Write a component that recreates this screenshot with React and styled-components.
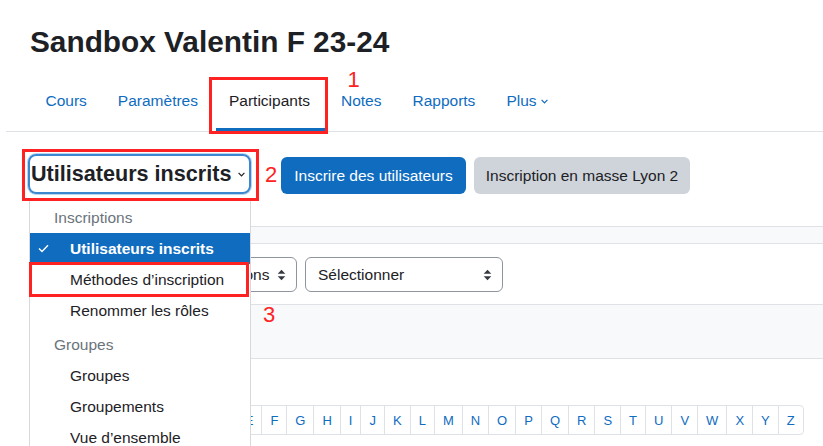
import React from "react";
import styled, { createGlobalStyle } from "styled-components";

const colors = {
  text: "#1d2125",
  link: "#0f6cbf",
  muted: "#6a737b",
  border: "#dee2e6",
  band: "#f8f9fa",
  field: "#8f959e",
  focus: "#3c88d0",
  secondary: "#ced4da",
  mark: "#ff2222",
};

const GlobalStyle = createGlobalStyle`
  html, body {
    margin: 0;
    padding: 0;
    background: #fff;
  }
  body {
    font-family: "Liberation Sans", Arial, sans-serif;
    color: ${colors.text};
    overflow: hidden;
  }
  #root {
    width: 823px;
    height: 446px;
    overflow: hidden;
  }
`;

const Page = styled.div`
  padding-top: 24px;
`;

const Title = styled.h1`
  margin: 0 0 0 30px;
  font-size: 29.8px;
  line-height: 36px;
  font-weight: 700;
  color: ${colors.text};
`;

const SecondaryNav = styled.nav`
  display: flex;
  margin: 11px 0 0 6px;
  padding-left: 24px;
  border-bottom: 1px solid ${colors.border};
`;

const Tab = styled.div`
  position: relative;
  display: flex;
  align-items: center;
  gap: 4px;
  height: 60px;
  padding: 0 15.5px;
  font-size: 15.5px;
  color: ${({ $active }) => ($active ? colors.text : colors.link)};

  &::after {
    content: "";
    position: absolute;
    left: 3px;
    right: 0;
    bottom: 0;
    height: 3px;
    background: ${({ $active }) => ($active ? colors.link : "transparent")};
  }
`;

const Highlight = styled.div`
  position: absolute;
  top: ${({ $top }) => $top}px;
  left: ${({ $left }) => $left}px;
  right: ${({ $right }) => $right}px;
  bottom: ${({ $bottom }) => $bottom}px;
  border: 3px solid ${colors.mark};
  pointer-events: none;
  z-index: 20;
`;

const Marker = styled.span`
  position: absolute;
  top: ${({ $top }) => $top}px;
  left: ${({ $left }) => $left}px;
  font-size: 22px;
  line-height: 22px;
  color: ${colors.mark};
  z-index: 20;
`;

const Content = styled.div`
  padding-left: 28px;
`;

const ActionRow = styled.div`
  display: flex;
  align-items: flex-start;
  margin-top: 22px;
`;

const SelectWrap = styled.div`
  position: relative;
`;

const PageSelect = styled.div`
  display: flex;
  align-items: center;
  justify-content: space-between;
  box-sizing: border-box;
  width: 223px;
  height: 40px;
  padding: 0 4px 0 1px;
  border: 2px solid ${colors.focus};
  border-radius: 8px;
  box-shadow: 0 0 0 1px rgba(60, 136, 208, 0.35);
  font-size: 21.6px;
  font-weight: 700;
  color: ${colors.text};
`;

const Button = styled.button`
  box-sizing: border-box;
  width: ${({ $width }) => $width}px;
  height: 37px;
  margin: 3px 0 0 ${({ $gap }) => $gap}px;
  padding: 0;
  border: none;
  border-radius: 6px;
  font-family: inherit;
  font-size: 15.5px;
  color: ${({ $variant }) => ($variant === "primary" ? "#fff" : colors.text)};
  background: ${({ $variant }) =>
    $variant === "primary" ? colors.link : colors.secondary};
`;

const Menu = styled.div`
  position: absolute;
  top: calc(100% + 6px);
  left: 1px;
  width: 222px;
  box-sizing: border-box;
  padding-top: 2px;
  background: #fff;
  border: 1px solid rgba(0, 0, 0, 0.15);
  border-bottom: none;
  z-index: 10;
`;

const MenuHeader = styled.div`
  padding: 4px 24px;
  margin-top: ${({ $spaced }) => ($spaced ? "4px" : "0")};
  line-height: 22px;
  font-size: 15.5px;
  color: ${colors.muted};
`;

const MenuItem = styled.div`
  position: relative;
  display: flex;
  align-items: center;
  padding: 4px 0 4px 8px;
  line-height: 23px;
  font-size: 15.5px;
  font-weight: ${({ $active }) => ($active ? 700 : 400)};
  color: ${({ $active }) => ($active ? "#fff" : colors.text)};
  background: ${({ $active }) => ($active ? colors.link : "transparent")};
`;

const CheckSlot = styled.span`
  display: flex;
  align-items: center;
  width: 32px;
  flex-shrink: 0;
`;

const Lower = styled.div`
  padding-left: 40px;
`;

const Band = styled.div`
  margin-top: ${({ $gap }) => $gap}px;
  height: ${({ $height }) => $height}px;
  background: ${colors.band};
  border-top: 1px solid ${colors.border};
  border-bottom: 1px solid ${colors.border};
`;

const FilterRow = styled.div`
  display: flex;
  gap: 8px;
  margin-top: 13px;
  padding-left: 138px;
`;

const FilterSelect = styled.div`
  display: flex;
  align-items: center;
  justify-content: space-between;
  box-sizing: border-box;
  width: ${({ $width }) => $width}px;
  height: 35px;
  padding: 0 10px 0 12px;
  border: 1px solid ${colors.field};
  border-radius: 6px;
  font-size: 15.5px;
  color: ${colors.text};
`;

const InitialsBar = styled.div`
  display: flex;
  align-items: center;
  margin-top: 46px;
  padding-left: 50px;
`;

const Initial = styled.span`
  display: flex;
  align-items: center;
  box-sizing: border-box;
  height: 30px;
  padding: 0 8px;
  font-size: 13px;
  color: ${colors.link};
  border: 1px solid ${colors.border};
  border-right: none;

  &:first-of-type {
    border-radius: 4px 0 0 4px;
  }
  &:last-child {
    border-right: 1px solid ${colors.border};
    border-radius: 0 4px 4px 0;
  }
`;

const Chevron = ({ color = colors.text, width = 7 }) => (
  <svg width={width} height="5" viewBox="0 0 7 5" fill="none">
    <path d="M0.6 0.8 L3.5 3.8 L6.4 0.8" stroke={color} strokeWidth="1.2" />
  </svg>
);

const SortArrows = () => (
  <svg width="9" height="12" viewBox="0 0 9 12">
    <path d="M4.5 0.8 L8.3 4.8 L0.7 4.8 Z" fill="#343a40" />
    <path d="M4.5 11.2 L8.3 7.2 L0.7 7.2 Z" fill="#343a40" />
  </svg>
);

const Check = () => (
  <svg width="11" height="9" viewBox="0 0 11 9" fill="none">
    <path d="M1 4.6 L4 7.6 L10 1.2" stroke="#fff" strokeWidth="1.4" />
  </svg>
);

const tabs = ["Cours", "Paramètres", "Participants", "Notes", "Rapports"];
const letters = "ABCDEFGHIJKLMNOPQRSTUVWXYZ".split("");

export default function App() {
  return (
    <Page>
      <GlobalStyle />
      <Title>Sandbox Valentin F 23-24</Title>

      <SecondaryNav>
        {tabs.map((t) => (
          <Tab key={t} $active={t === "Participants"}>
            {t}
            {t === "Participants" && (
              <>
                <Highlight $top={6} $left={-4} $right={-3} $bottom={-3} />
                <Marker $top={-2} $left={134}>
                  1
                </Marker>
              </>
            )}
          </Tab>
        ))}
        <Tab>
          Plus
          <Chevron color={colors.link} />
        </Tab>
      </SecondaryNav>

      <Content>
        <ActionRow>
          <SelectWrap>
            <PageSelect>
              Utilisateurs inscrits
              <Chevron />
            </PageSelect>
            <Highlight $top={-5} $left={-6} $right={-8} $bottom={-7} />
            <Marker $top={10} $left={237}>
              2
            </Marker>

            <Menu>
              <MenuHeader>Inscriptions</MenuHeader>
              <MenuItem $active>
                <CheckSlot>
                  <Check />
                </CheckSlot>
                Utilisateurs inscrits
              </MenuItem>
              <MenuItem>
                <CheckSlot />
                Méthodes d’inscription
                <Highlight $top={-2} $left={-1} $right={1} $bottom={-2} />
              </MenuItem>
              <MenuItem>
                <CheckSlot />
                Renommer les rôles
              </MenuItem>
              <MenuHeader $spaced>Groupes</MenuHeader>
              <MenuItem>
                <CheckSlot />
                Groupes
              </MenuItem>
              <MenuItem>
                <CheckSlot />
                Groupements
              </MenuItem>
              <MenuItem>
                <CheckSlot />
                Vue d’ensemble
              </MenuItem>
              <Marker $top={103} $left={233}>
                3
              </Marker>
            </Menu>
          </SelectWrap>

          <Button $variant="primary" $width={185} $gap={30}>
            Inscrire des utilisateurs
          </Button>
          <Button $width={216} $gap={8}>
            Inscription en masse Lyon 2
          </Button>
        </ActionRow>
      </Content>

      <Lower>
        <Band $gap={32} $height={16} />
        <FilterRow>
          <FilterSelect $width={119}>
            Inscriptions
            <SortArrows />
          </FilterSelect>
          <FilterSelect $width={198}>
            Sélectionner
            <SortArrows />
          </FilterSelect>
        </FilterRow>
        <Band $gap={12} $height={53} />
        <InitialsBar>
          <Initial>Tout</Initial>
          {letters.map((l) => (
            <Initial key={l}>{l}</Initial>
          ))}
        </InitialsBar>
      </Lower>
    </Page>
  );
}
